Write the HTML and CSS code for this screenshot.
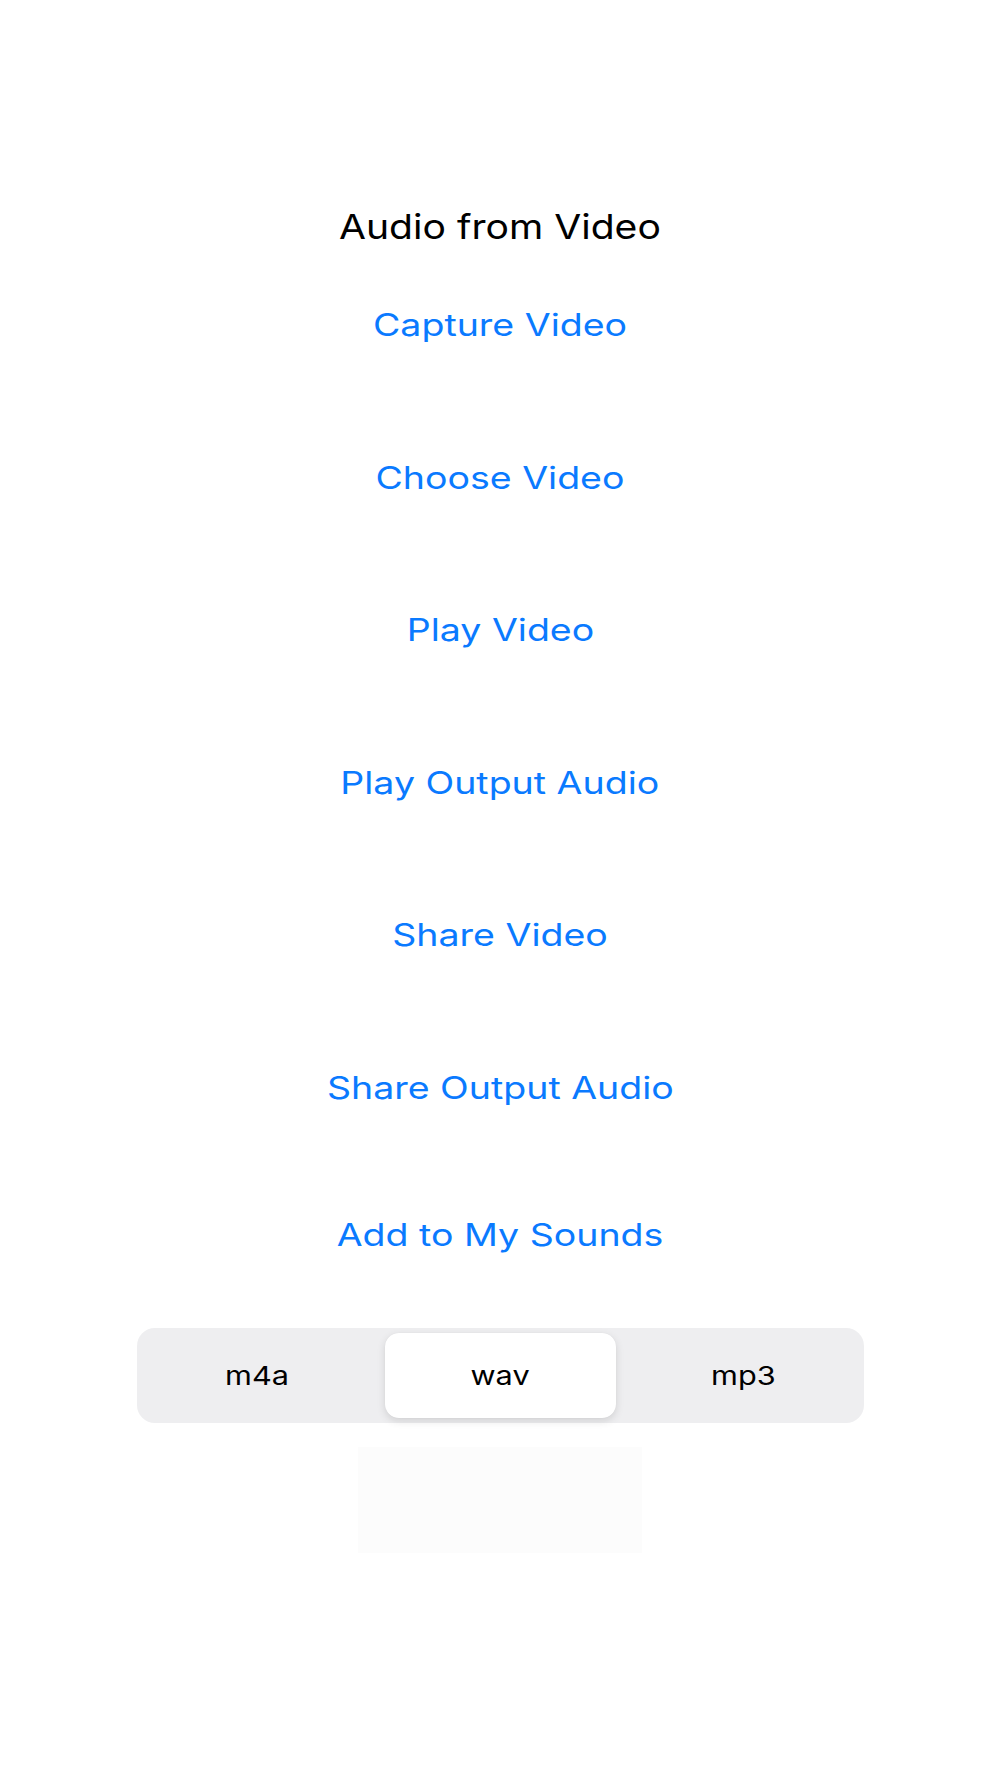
FILE: index.html
```html
<!DOCTYPE html>
<html>
  <head>
    <meta charset="utf-8" />
    <title>Audio from Video</title>
    <link rel="stylesheet" href="styles.css">
  </head>
  <body>
    <div id="screen">
      <h1 class="title"><span class="wide">Audio from Video</span></h1>
      <div class="actions">
        <a class="action" href="#"><span class="wide">Capture Video</span></a>
        <a class="action" href="#"><span class="wide">Choose Video</span></a>
        <a class="action" href="#"><span class="wide">Play Video</span></a>
        <a class="action" href="#"><span class="wide">Play Output Audio</span></a>
        <a class="action" href="#"><span class="wide">Share Video</span></a>
        <a class="action" href="#"><span class="wide">Share Output Audio</span></a>
        <a class="action" href="#"><span class="wide">Add to My Sounds</span></a>
      </div>
      <div class="segments">
        <div class="segment"><span class="wide">m4a</span></div>
        <div class="segment selected"><span class="wide">wav</span></div>
        <div class="segment"><span class="wide">mp3</span></div>
      </div>
      <div class="preview"></div>
    </div>
  </body>
</html>
```

FILE: styles.css
```css
html {
  margin: 0px;
  padding: 0px;
}
body {
  font-family: 'Inter', 'Liberation Sans', sans-serif;
  margin: 0px;
  padding: 0px;
  color: #000;
  background-color: #fff;
}
#screen {
  display: flex;
  flex-direction: column;
  align-items: center;
  padding-top: 205px;
}
.wide {
  display: inline-block;
  transform: scaleX(1.21);
}
.title {
  margin: 0px;
  height: 44px;
  line-height: 44px;
  font-size: 34px;
  font-weight: 400;
  text-align: center;
}
.title .wide {
  transform: scaleX(1.15);
}
.actions {
  display: flex;
  flex-direction: column;
  width: 100%;
}
.action {
  display: block;
  height: 152.5px;
  line-height: 152.5px;
  font-size: 31px;
  color: #0a7aff;
  text-align: center;
  text-decoration: none;
}
.action:last-child {
  height: 142px;
  line-height: 142px;
}
.segments {
  display: grid;
  grid-template-columns: 1fr 1fr 1fr;
  gap: 12px;
  box-sizing: border-box;
  width: 727px;
  height: 95px;
  margin-top: 22px;
  padding: 5px;
  border-radius: 18px;
  background-color: #eeeef0;
}
.segment {
  display: flex;
  align-items: center;
  justify-content: center;
  font-size: 26px;
  border-radius: 14px;
}
.segment .wide {
  transform: scaleX(1.18);
}
.segment.selected {
  background-color: #fff;
  box-shadow: 0px 3px 8px rgba(0, 0, 0, 0.12), 0px 0px 1px rgba(0, 0, 0, 0.08);
}
.preview {
  width: 284px;
  height: 106px;
  margin-top: 24px;
  background-color: #fcfcfc;
}
```
